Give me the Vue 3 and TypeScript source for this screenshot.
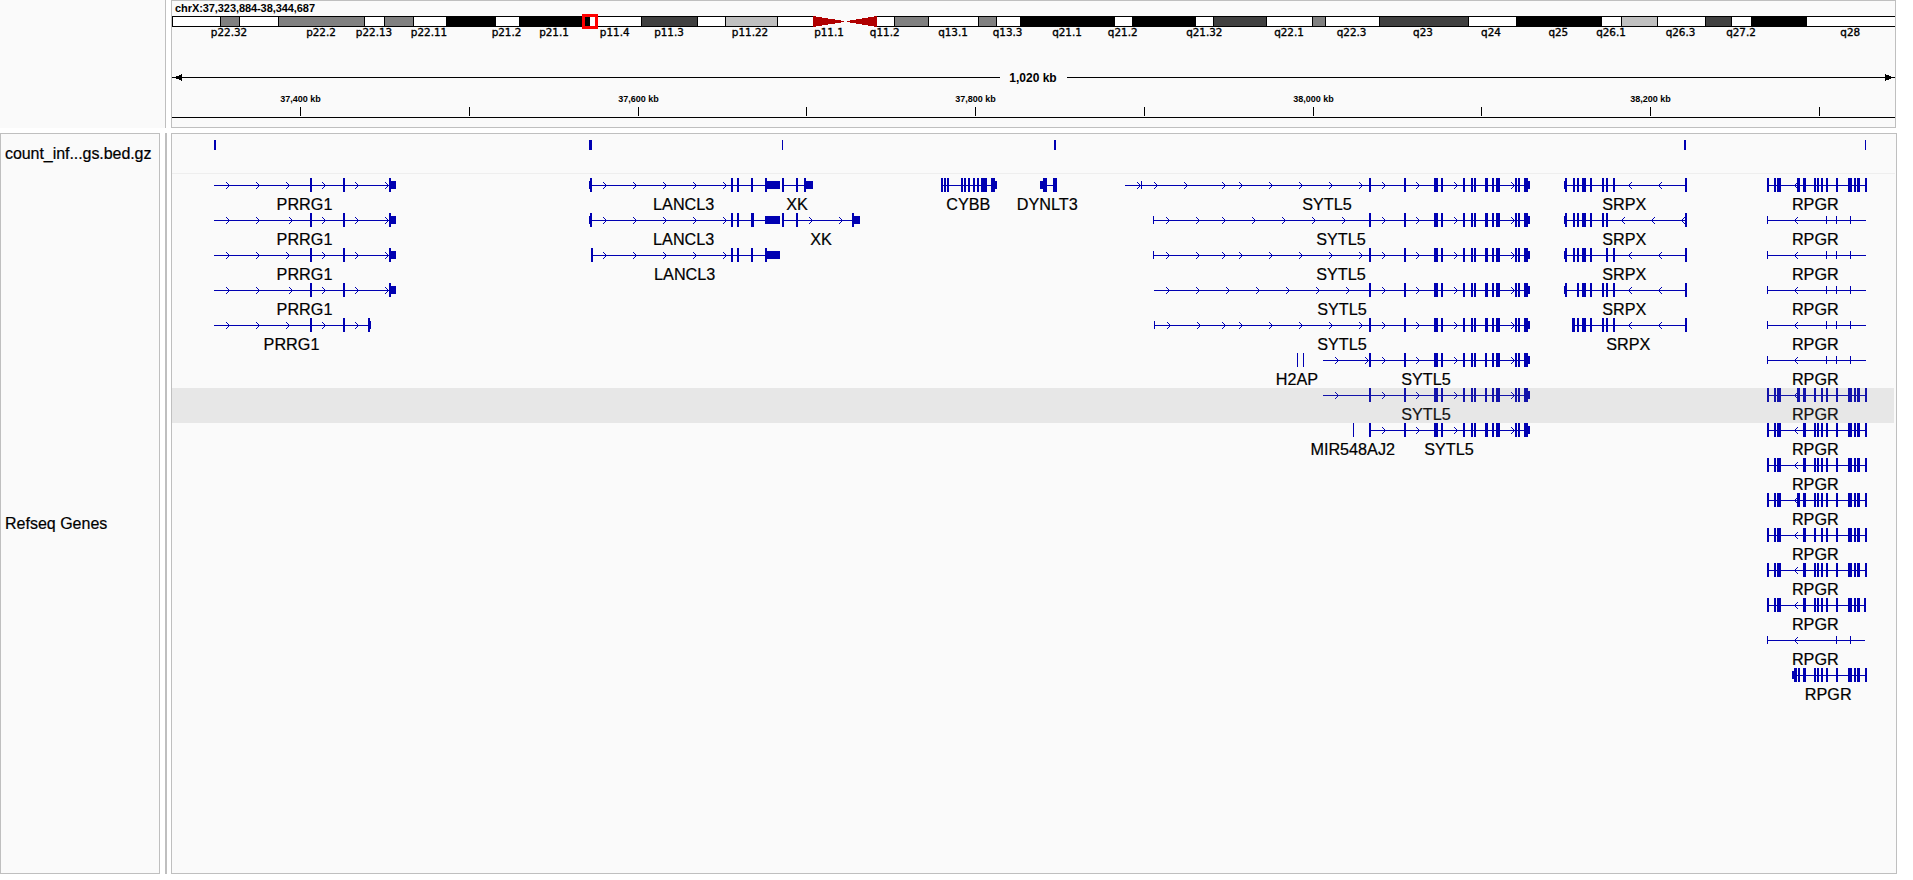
<script setup lang="ts">
type Span = [number, number]

interface Gene {
  row: number
  name: string
  labelX: number
  line?: Span
  coding?: Span[]
  utr?: Span[]
  arrows?: number[]
  reverse?: boolean
}

interface Band {
  x: number
  end: number
  fill: string
}

const edges: [number, string][] = [
  [172, '#fff'], [220, '#808080'], [239, '#fff'], [278, '#808080'], [364, '#fff'],
  [384, '#808080'], [413, '#fff'], [446, '#000'], [495, '#fff'], [519, '#000'],
  [589, '#fff'], [641, '#404040'], [697, '#fff'], [725, '#c0c0c0'], [777, '#fff'],
  [813, 'none'], [876, '#fff'], [894, '#808080'], [928, '#fff'], [978, '#808080'],
  [996, '#fff'], [1020, '#000'], [1114, '#fff'], [1132, '#000'], [1195, '#fff'],
  [1213, '#404040'], [1266, '#fff'], [1312, '#808080'], [1325, '#fff'], [1379, '#404040'],
  [1468, '#fff'], [1516, '#000'], [1601, '#fff'], [1621, '#c0c0c0'], [1657, '#fff'],
  [1705, '#404040'], [1731, '#fff'], [1751, '#000'], [1806, '#fff'], [1895, 'none'],
]
const bands: Band[] = edges
  .slice(0, -1)
  .map(([x, fill], i) => ({ x, end: edges[i + 1][0], fill }))
  .filter((b) => b.fill !== 'none')

const bandLabels: [string, number][] = [
  ['p22.32', 229], ['p22.2', 321], ['p22.13', 374], ['p22.11', 429], ['p21.2', 506.5],
  ['p21.1', 554], ['p11.4', 614.7], ['p11.3', 669], ['p11.22', 750], ['p11.1', 829],
  ['q11.2', 884.7], ['q13.1', 953], ['q13.3', 1007.6], ['q21.1', 1067], ['q21.2', 1122.7],
  ['q21.32', 1204.3], ['q22.1', 1289], ['q22.3', 1351.6], ['q23', 1423], ['q24', 1491],
  ['q25', 1558.3], ['q26.1', 1611], ['q26.3', 1680.5], ['q27.2', 1741], ['q28', 1850.2],
]

const ticks: { x: number; label?: string }[] = [
  { x: 300, label: '37,400 kb' }, { x: 469 }, { x: 638, label: '37,600 kb' }, { x: 806 },
  { x: 975, label: '37,800 kb' }, { x: 1144 }, { x: 1313, label: '38,000 kb' }, { x: 1481 },
  { x: 1650, label: '38,200 kb' }, { x: 1819 },
]

const bedFeatures: Span[] = [[214, 2], [589, 3], [782, 1], [1054, 2], [1684, 2], [1865, 1]]

const two = (...xs: number[]): Span[] => xs.map((x) => [x, 2])

const prrg1: Gene[] = [0, 1, 2, 3].map((row) => ({
  row,
  name: 'PRRG1',
  labelX: 304.5,
  line: [214, 396],
  coding: two(310, 343, 389),
  utr: [[391, 5]],
  arrows: [226, 256, row % 2 ? 289 : 286, 322, 355, 385],
}))

const sytl5Arrows: number[][] = [
  [1137, 1154, 1184, 1222, 1239, 1269, 1299, 1329, 1359],
  [1166, 1196, 1222, 1252, 1282, 1312, 1342],
  [1166, 1196, 1222, 1239, 1269, 1299, 1329, 1359],
  [1166, 1196, 1226, 1256, 1286, 1316, 1346],
  [1167, 1197, 1222, 1239, 1269, 1299, 1329, 1359],
  [1335, 1365],
  [1335],
  [],
]
const sytl5Start = [1125, 1153, 1153, 1154, 1154, 1323, 1323, 1369]
const sytl5Label = [1327, 1341, 1341, 1342, 1342, 1426, 1426, 1449]
const sytl5Utr: Span[][] = [[[1141, 1]], [[1153, 1]], [[1153, 1]], [], [[1154, 1]], [], [], []]
const sytl5: Gene[] = sytl5Arrows.map((arrows, row) => ({
  row,
  name: 'SYTL5',
  labelX: sytl5Label[row],
  line: [sytl5Start[row], 1530],
  coding: [
    ...two(1369, 1404), [1434, 4], ...two(1441, 1463, 1471, 1474),
    [1485, row === 5 || row === 6 ? 2 : 3], [1492, 2], [1496, 4], ...two(1515, 1518), [1524, 4],
  ],
  utr: [...sytl5Utr[row], [1528, 2]],
  arrows: [...arrows, 1382, 1416, 1454, 1511],
}))

const srpxSkipped = [0, 1613, 1602, 1573, 1573]
const srpx: Gene[] = srpxSkipped.map((skip, row) => {
  const exons: Span[] = [...two(1573, 1577), [1582, 4], ...two(1590, 1602, 1606, 1613, 1685)]
  const last = row === 4
  return {
    row,
    name: 'SRPX',
    labelX: last ? 1628.3 : 1624.3,
    line: [last ? 1572 : 1564, 1687],
    coding: [last ? [1572, 3] : [1565, 2], ...exons.filter(([x]) => x !== skip)],
    utr: last ? [] : [[1564, 1]],
    arrows: row === 1 ? [1622, 1652, 1682] : [1629, 1659],
    reverse: true,
  }
})

const rpgrTail: Span[] = [
  [1803, 3], ...two(1814, 1817, 1821, 1826, 1836), [1848, 4], [1854, 2], [1857, 3], [1865, 2],
]
function rpgrFull(row: number, skipped: number[]): Gene {
  const end = row === 12 ? 1864 : 1865
  const exons: Span[] = [...two(1767, 1774), [1777, 4], [1797, 3], ...rpgrTail]
  return {
    row,
    name: 'RPGR',
    labelX: 1815.3,
    line: [1767, end + 2],
    coding: exons
      .filter(([x]) => !skipped.includes(x))
      .map(([x, w]): Span => (x === 1865 ? [end, w] : [x, w])),
    arrows: [1795],
    reverse: true,
  }
}
function rpgrNoncoding(row: number): Gene {
  const exons: Span[] = [[1767, 1], [1826, 1], [1836, 1], [1850, 1]]
  return {
    row,
    name: 'RPGR',
    labelX: 1815.3,
    line: [1767, row === 13 ? 1865 : 1866],
    utr: row === 13 ? exons.filter(([x]) => x !== 1826) : exons,
    arrows: [1795],
    reverse: true,
  }
}

const genes: Gene[] = [
  ...prrg1,
  {
    row: 4, name: 'PRRG1', labelX: 291.5, line: [214, 371], coding: two(310, 343, 368),
    utr: [[370, 1]], arrows: [226, 256, 286, 322, 355],
  },
  {
    row: 0, name: 'LANCL3', labelX: 683.7, line: [589, 780], coding: two(590, 731, 737, 751, 765),
    utr: [[589, 1], [766, 14]], arrows: [603, 633, 663, 693, 723],
  },
  {
    row: 1, name: 'LANCL3', labelX: 683.7, line: [589, 780], coding: [...two(590, 731, 737), [751, 3]],
    utr: [[589, 1], [765, 15]], arrows: [603, 633, 663, 693, 723],
  },
  {
    row: 2, name: 'LANCL3', labelX: 684.7, line: [591, 780], coding: two(591, 731, 737, 751, 765),
    utr: [[766, 14]], arrows: [603, 633, 663, 693, 723],
  },
  { row: 0, name: 'XK', labelX: 797, line: [782, 813], coding: two(782, 796, 804), utr: [[806, 7]] },
  {
    row: 1, name: 'XK', labelX: 821, line: [782, 860], coding: two(782, 796, 852),
    utr: [[854, 6]], arrows: [809, 839],
  },
  {
    row: 0, name: 'CYBB', labelX: 968.3, line: [941, 997],
    coding: [...two(941, 944, 947, 961, 964, 968, 973, 977), [981, 6], [991, 4]], utr: [[995, 2]],
  },
  {
    row: 0, name: 'DYNLT3', labelX: 1047.3, line: [1040, 1057],
    coding: [[1043, 4], [1053, 4]], utr: [[1040, 3]],
  },
  ...sytl5,
  { row: 5, name: 'H2AP', labelX: 1297, coding: [[1297, 1], [1303, 1]] },
  { row: 7, name: 'MIR548AJ2', labelX: 1352.7, coding: [[1353, 1]] },
  ...srpx,
  rpgrFull(0, []),
  ...[1, 2, 3, 4, 5].map(rpgrNoncoding),
  rpgrFull(6, [1817]),
  rpgrFull(7, [1797]),
  rpgrFull(8, [1797]),
  rpgrFull(9, []),
  rpgrFull(10, [1797, 1817]),
  rpgrFull(11, [1797]),
  rpgrFull(12, [1797]),
  rpgrNoncoding(13),
  {
    row: 14, name: 'RPGR', labelX: 1828.2, line: [1792, 1867],
    coding: [[1794, 3], [1798, 2], ...rpgrTail], utr: [[1792, 2]],
  },
]

// Chevrons are three stepped pixels on either side of the intron line.
function chevron(x: number, reverse = false): string {
  return [0, 1, 2]
    .map((i) => {
      const d = reverse ? i + 1 : 3 - i
      return `M${x + i} ${7 - d}h1v1h-1zM${x + i} ${7 + d}h1v1h-1z`
    })
    .join('')
}

const boxes = (spans: Span[] | undefined, y: number, h: number): string =>
  (spans ?? []).map(([x, w]) => `M${x} ${y}h${w}v${h}h${-w}z`).join('')

function genePath(g: Gene): string {
  const line = g.line ? `M${g.line[0]} 7H${g.line[1]}v1H${g.line[0]}z` : ''
  return line + boxes(g.coding, 0, 14) + boxes(g.utr, 3, 8)
}
const arrowPath = (g: Gene): string => (g.arrows ?? []).map((x) => chevron(x, g.reverse)).join('')
</script>

<template>
  <div class="browser">
    <header class="header-row">
      <div class="header-names"></div>
      <div class="header-panel">
        <svg width="1723" height="126" viewBox="172 1 1723 126">
          <text class="locus" x="175" y="12" textLength="140">chrX:37,323,884-38,344,687</text>
          <g class="crisp">
            <g v-for="b in bands" :key="b.x">
              <rect :x="b.x" y="16" :width="b.end - b.x + 1" height="11" fill="#000" />
              <rect :x="b.x + 1" y="17" :width="b.end - b.x - 1" height="9" :fill="b.fill" />
            </g>
            <path d="M813 16L844 21v1L813 27zM877 16L847 21v1L877 27z" fill="#b00000" />
            <rect x="583.5" y="15.5" width="13" height="12" class="window" />
            <path d="M172 77H1000v1H172zM1067 77H1895v1H1067z" />
            <path d="M174 77.5L182 74v7zM1894 77.5L1885 74v7z" />
            <path d="M172 117H1895v1H172z" />
            <rect v-for="t in ticks" :key="t.x" :x="t.x" y="107" width="1" height="9" />
          </g>
          <text v-for="[name, x] in bandLabels" :key="name" class="band" :x="x" y="36">{{ name }}</text>
          <text class="span" x="1033" y="82">1,020 kb</text>
          <template v-for="t in ticks" :key="t.x">
            <text v-if="t.label" class="tick" :x="t.x + 0.5" y="102">{{ t.label }}</text>
          </template>
        </svg>
      </div>
    </header>

    <main class="track-row">
      <aside class="names">
        <div class="name bed-name">count_inf...gs.bed.gz</div>
        <div class="name gene-name">Refseq Genes</div>
      </aside>
      <div class="splitter"></div>
      <section class="tracks">
        <svg width="1724" height="739" viewBox="172 134 1724 739">
          <rect x="172" y="173" width="1723" height="1" fill="#eee" />
          <path class="feature crisp" :d="boxes(bedFeatures, 140, 10)" />
          <g v-for="(g, i) in genes" :key="i" :transform="`translate(0 ${178 + g.row * 35})`">
            <path class="feature crisp" :d="genePath(g)" />
            <path class="feature crisp" :d="arrowPath(g)" />
            <text class="gene" :x="g.labelX" y="32">{{ g.name }}</text>
          </g>
          <rect x="172" y="388" width="1722" height="35" class="highlight" />
        </svg>
      </section>
    </main>
  </div>
</template>

<style>
html,
body {
  margin: 0;
  background: #fff;
  overflow: hidden;
}
</style>

<style scoped>
.browser {
  box-sizing: border-box;
  width: 1913px;
  height: 880px;
  display: flex;
  flex-direction: column;
  gap: 5px;
  background: #fff;
  font-family: "Liberation Sans", Arial, sans-serif;
  color: #000;
}
.header-row {
  display: flex;
  gap: 5px;
  height: 128px;
}
.header-names {
  box-sizing: border-box;
  width: 166px;
  background: #fafafa;
  border-right: 1px solid #bfbfbf;
}
.header-panel {
  box-sizing: border-box;
  width: 1725px;
  background: #fafafa;
  border: 1px solid #bfbfbf;
}
.track-row {
  display: flex;
  height: 741px;
}
.names {
  box-sizing: border-box;
  width: 160px;
  margin-right: 5px;
  background: #fafafa;
  border: 1px solid #bfbfbf;
}
.name {
  display: flex;
  align-items: center;
  padding-left: 4px;
  font-size: 16px;
  white-space: nowrap;
  -webkit-text-stroke: 0.2px #000;
}
.bed-name {
  height: 40px;
  letter-spacing: -0.06px;
}
.gene-name {
  height: 699px;
}
.splitter {
  width: 2px;
  margin-right: 4px;
  background: #bfbfbf;
}
.tracks {
  box-sizing: border-box;
  width: 1726px;
  background: #fafafa;
  border: 1px solid #bfbfbf;
}
svg {
  display: block;
}
.crisp {
  shape-rendering: crispEdges;
}
.locus {
  font-size: 11px;
  font-weight: bold;
}
.band {
  font-family: "DejaVu Sans", sans-serif;
  font-size: 10.4px;
  text-anchor: middle;
  stroke: #000;
  stroke-width: 0.35px;
}
.span {
  font-size: 12px;
  font-weight: bold;
  text-anchor: middle;
}
.tick {
  font-size: 9px;
  font-weight: bold;
  text-anchor: middle;
}
.window {
  fill: none;
  stroke: #f00;
  stroke-width: 3;
}
.feature {
  fill: #0000b2;
}
.gene {
  font-size: 16.2px;
  text-anchor: middle;
  stroke: #000;
  stroke-width: 0.2px;
}
.highlight {
  fill: rgba(128, 128, 128, 0.15);
}
</style>
